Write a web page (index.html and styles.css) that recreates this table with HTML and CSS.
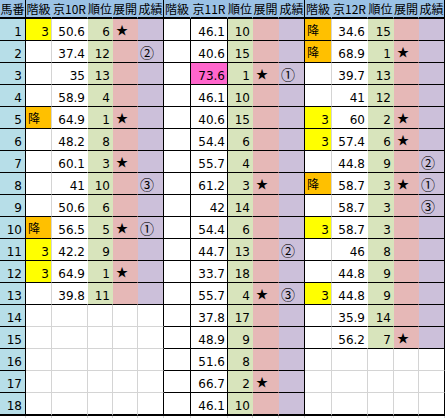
FILE: index.html
```html
<!DOCTYPE html>
<html lang="ja">
<head>
<meta charset="utf-8">
<title>京 10R-12R</title>
<link rel="stylesheet" href="styles.css">
</head>
<body>
<div class="sheet">
  <div class="h"><div>馬番</div><div>階級</div><div>京10R</div><div>順位</div><div>展開</div><div>成績</div><div>階級</div><div>京11R</div><div>順位</div><div>展開</div><div>成績</div><div>階級</div><div>京12R</div><div>順位</div><div>展開</div><div>成績</div></div>
  <div class="r"><div>1</div><div class="y">3</div><div>50.6</div><div>6</div><div>★</div><div></div><div></div><div>46.1</div><div>10</div><div></div><div></div><div class="o">降</div><div>34.6</div><div>15</div><div></div><div></div></div>
  <div class="r"><div>2</div><div></div><div>37.4</div><div>12</div><div></div><div>②</div><div></div><div>40.6</div><div>15</div><div></div><div></div><div class="o">降</div><div>68.9</div><div>1</div><div>★</div><div></div></div>
  <div class="r"><div>3</div><div></div><div>35</div><div>13</div><div></div><div></div><div></div><div class="p">73.6</div><div>1</div><div>★</div><div>①</div><div></div><div>39.7</div><div>13</div><div></div><div></div></div>
  <div class="r"><div>4</div><div></div><div>58.9</div><div>4</div><div></div><div></div><div></div><div>46.1</div><div>10</div><div></div><div></div><div></div><div>41</div><div>12</div><div></div><div></div></div>
  <div class="r"><div>5</div><div class="o">降</div><div>64.9</div><div>1</div><div>★</div><div></div><div></div><div>40.6</div><div>15</div><div></div><div></div><div class="y">3</div><div>60</div><div>2</div><div>★</div><div></div></div>
  <div class="r"><div>6</div><div></div><div>48.2</div><div>8</div><div></div><div></div><div></div><div>54.4</div><div>6</div><div></div><div></div><div class="y">3</div><div>57.4</div><div>6</div><div>★</div><div></div></div>
  <div class="r"><div>7</div><div></div><div>60.1</div><div>3</div><div>★</div><div></div><div></div><div>55.7</div><div>4</div><div></div><div></div><div></div><div>44.8</div><div>9</div><div></div><div>②</div></div>
  <div class="r"><div>8</div><div></div><div>41</div><div>10</div><div></div><div>③</div><div></div><div>61.2</div><div>3</div><div>★</div><div></div><div class="o">降</div><div>58.7</div><div>3</div><div>★</div><div>①</div></div>
  <div class="r"><div>9</div><div></div><div>50.6</div><div>6</div><div></div><div></div><div></div><div>42</div><div>14</div><div></div><div></div><div></div><div>58.7</div><div>3</div><div></div><div>③</div></div>
  <div class="r"><div>10</div><div class="o">降</div><div>56.5</div><div>5</div><div>★</div><div>①</div><div></div><div>54.4</div><div>6</div><div></div><div></div><div class="y">3</div><div>58.7</div><div>3</div><div></div><div></div></div>
  <div class="r"><div>11</div><div class="y">3</div><div>42.2</div><div>9</div><div></div><div></div><div></div><div>44.7</div><div>13</div><div></div><div>②</div><div></div><div>46</div><div>8</div><div></div><div></div></div>
  <div class="r"><div>12</div><div class="y">3</div><div>64.9</div><div>1</div><div>★</div><div></div><div></div><div>33.7</div><div>18</div><div></div><div></div><div></div><div>44.8</div><div>9</div><div></div><div></div></div>
  <div class="r"><div>13</div><div></div><div>39.8</div><div>11</div><div></div><div></div><div></div><div>55.7</div><div>4</div><div>★</div><div>③</div><div class="y">3</div><div>44.8</div><div>9</div><div></div><div></div></div>
  <div class="r g1"><div>14</div><div></div><div></div><div></div><div></div><div></div><div></div><div>37.8</div><div>17</div><div></div><div></div><div></div><div>35.9</div><div>14</div><div></div><div></div></div>
  <div class="r g1"><div>15</div><div></div><div></div><div></div><div></div><div></div><div></div><div>48.9</div><div>9</div><div></div><div></div><div></div><div>56.2</div><div>7</div><div>★</div><div></div></div>
  <div class="r g1 g3"><div>16</div><div></div><div></div><div></div><div></div><div></div><div></div><div>51.6</div><div>8</div><div></div><div></div><div></div><div></div><div></div><div></div><div></div></div>
  <div class="r g1 g3"><div>17</div><div></div><div></div><div></div><div></div><div></div><div></div><div>66.7</div><div>2</div><div>★</div><div></div><div></div><div></div><div></div><div></div><div></div></div>
  <div class="r g1 g3 last"><div>18</div><div></div><div></div><div></div><div></div><div></div><div></div><div>46.1</div><div>10</div><div></div><div></div><div></div><div></div><div></div><div></div><div></div></div>
  <div class="f"><div></div><div></div><div></div><div></div><div></div><div></div><div></div><div></div><div></div><div></div><div></div><div></div><div></div><div></div><div></div><div></div></div>
</div>
</body>
</html>
```

FILE: styles.css
```css
html, body {
  margin: 0;
  padding: 0;
  background: #fff;
}

.sheet {
  width: 445px;
  font-family: "DejaVu Sans", sans-serif;
  font-size: 12px;
  color: #000;
}

.h, .r, .f {
  display: grid;
  grid-template-columns: 26px 26px 36px 25px 25px 26px 27px 37px 25px 26px 26px 27px 36px 26px 25px 26px;
}

/* header */
.h > div {
  height: 19px;
  box-sizing: border-box;
  background: #9bc2e6;
  border-right: 1px solid transparent;
  border-bottom: 2px solid #000;
  font-family: "Noto Sans CJK JP", sans-serif;
  font-size: 12px;
  line-height: 17px;
  text-align: center;
  white-space: nowrap;
  overflow: hidden;
}
.h > :nth-child(1),
.h > :nth-child(6),
.h > :nth-child(11),
.h > :nth-child(16) {
  border-right-color: #000;
}

/* body rows */
.r > div {
  height: 22px;
  box-sizing: border-box;
  border-right: 1px solid transparent;
  border-bottom: 1px solid #000;
  padding: 4px 2px 0 2px;
  line-height: 18px;
  text-align: right;
  white-space: nowrap;
  overflow: hidden;
  background: #fff;
}

.r > :nth-child(1) {
  background: #b7dee8;
  border-right-color: #000;
  padding-right: 3px;
}

/* 順位 */
.r > :nth-child(4),
.r > :nth-child(9),
.r > :nth-child(14) {
  background: #d8e4bc;
}

/* 展開 / 成績 : text columns */
.r > :nth-child(5),
.r > :nth-child(10),
.r > :nth-child(15) {
  background: #e6b8b7;
}
.r > :nth-child(6),
.r > :nth-child(11),
.r > :nth-child(16) {
  background: #ccc0da;
}
.r > :nth-child(5),
.r > :nth-child(10),
.r > :nth-child(15),
.r > :nth-child(6),
.r > :nth-child(11),
.r > :nth-child(16) {
  font-family: "Noto Sans CJK JP", sans-serif;
  text-align: left;
  padding: 1px 0 0 3px;
  line-height: 20px;
}
.r > :nth-child(6),
.r > :nth-child(11),
.r > :nth-child(16) {
  font-size: 14px;
  padding-left: 2px;
}

/* vertical rules */
.r > :nth-child(2),
.r > :nth-child(12) {
  border-right-color: #d4d4d4;
}
.r > :nth-child(6),
.r > :nth-child(7),
.r > :nth-child(8),
.r > :nth-child(11),
.r > :nth-child(16) {
  border-right-color: #000;
}

/* fills in 階級 / value columns */
.r > .y {
  background: #ffff00;
}
.r > .o {
  background: #ffc000;
  font-family: "Noto Sans CJK JP", sans-serif;
  text-align: left;
  padding: 1px 0 0 2px;
  line-height: 20px;
}
.r > .p {
  background: #ff66cc;
}

/* empty areas with plain gridlines */
.g1 > :nth-child(n+2):nth-child(-n+6) {
  background: #fff;
  border-bottom-color: #d4d4d4;
}
.g1 > :nth-child(n+2):nth-child(-n+5) {
  border-right-color: #d4d4d4;
}
.g3 > :nth-child(n+12) {
  background: #fff;
  border-bottom-color: #d4d4d4;
}
.g3 > :nth-child(n+12):nth-child(-n+15) {
  border-right-color: #d4d4d4;
}

.last > div {
  height: 23px;
  border-bottom: 2px solid #000;
}
.last.g1 > :nth-child(n+2),
.last.g3 > :nth-child(n+12) {
  border-bottom-color: #000;
}

/* gridline stubs below the table */
.f > div {
  height: 2px;
  border-right: 1px solid #d4d4d4;
}
```
